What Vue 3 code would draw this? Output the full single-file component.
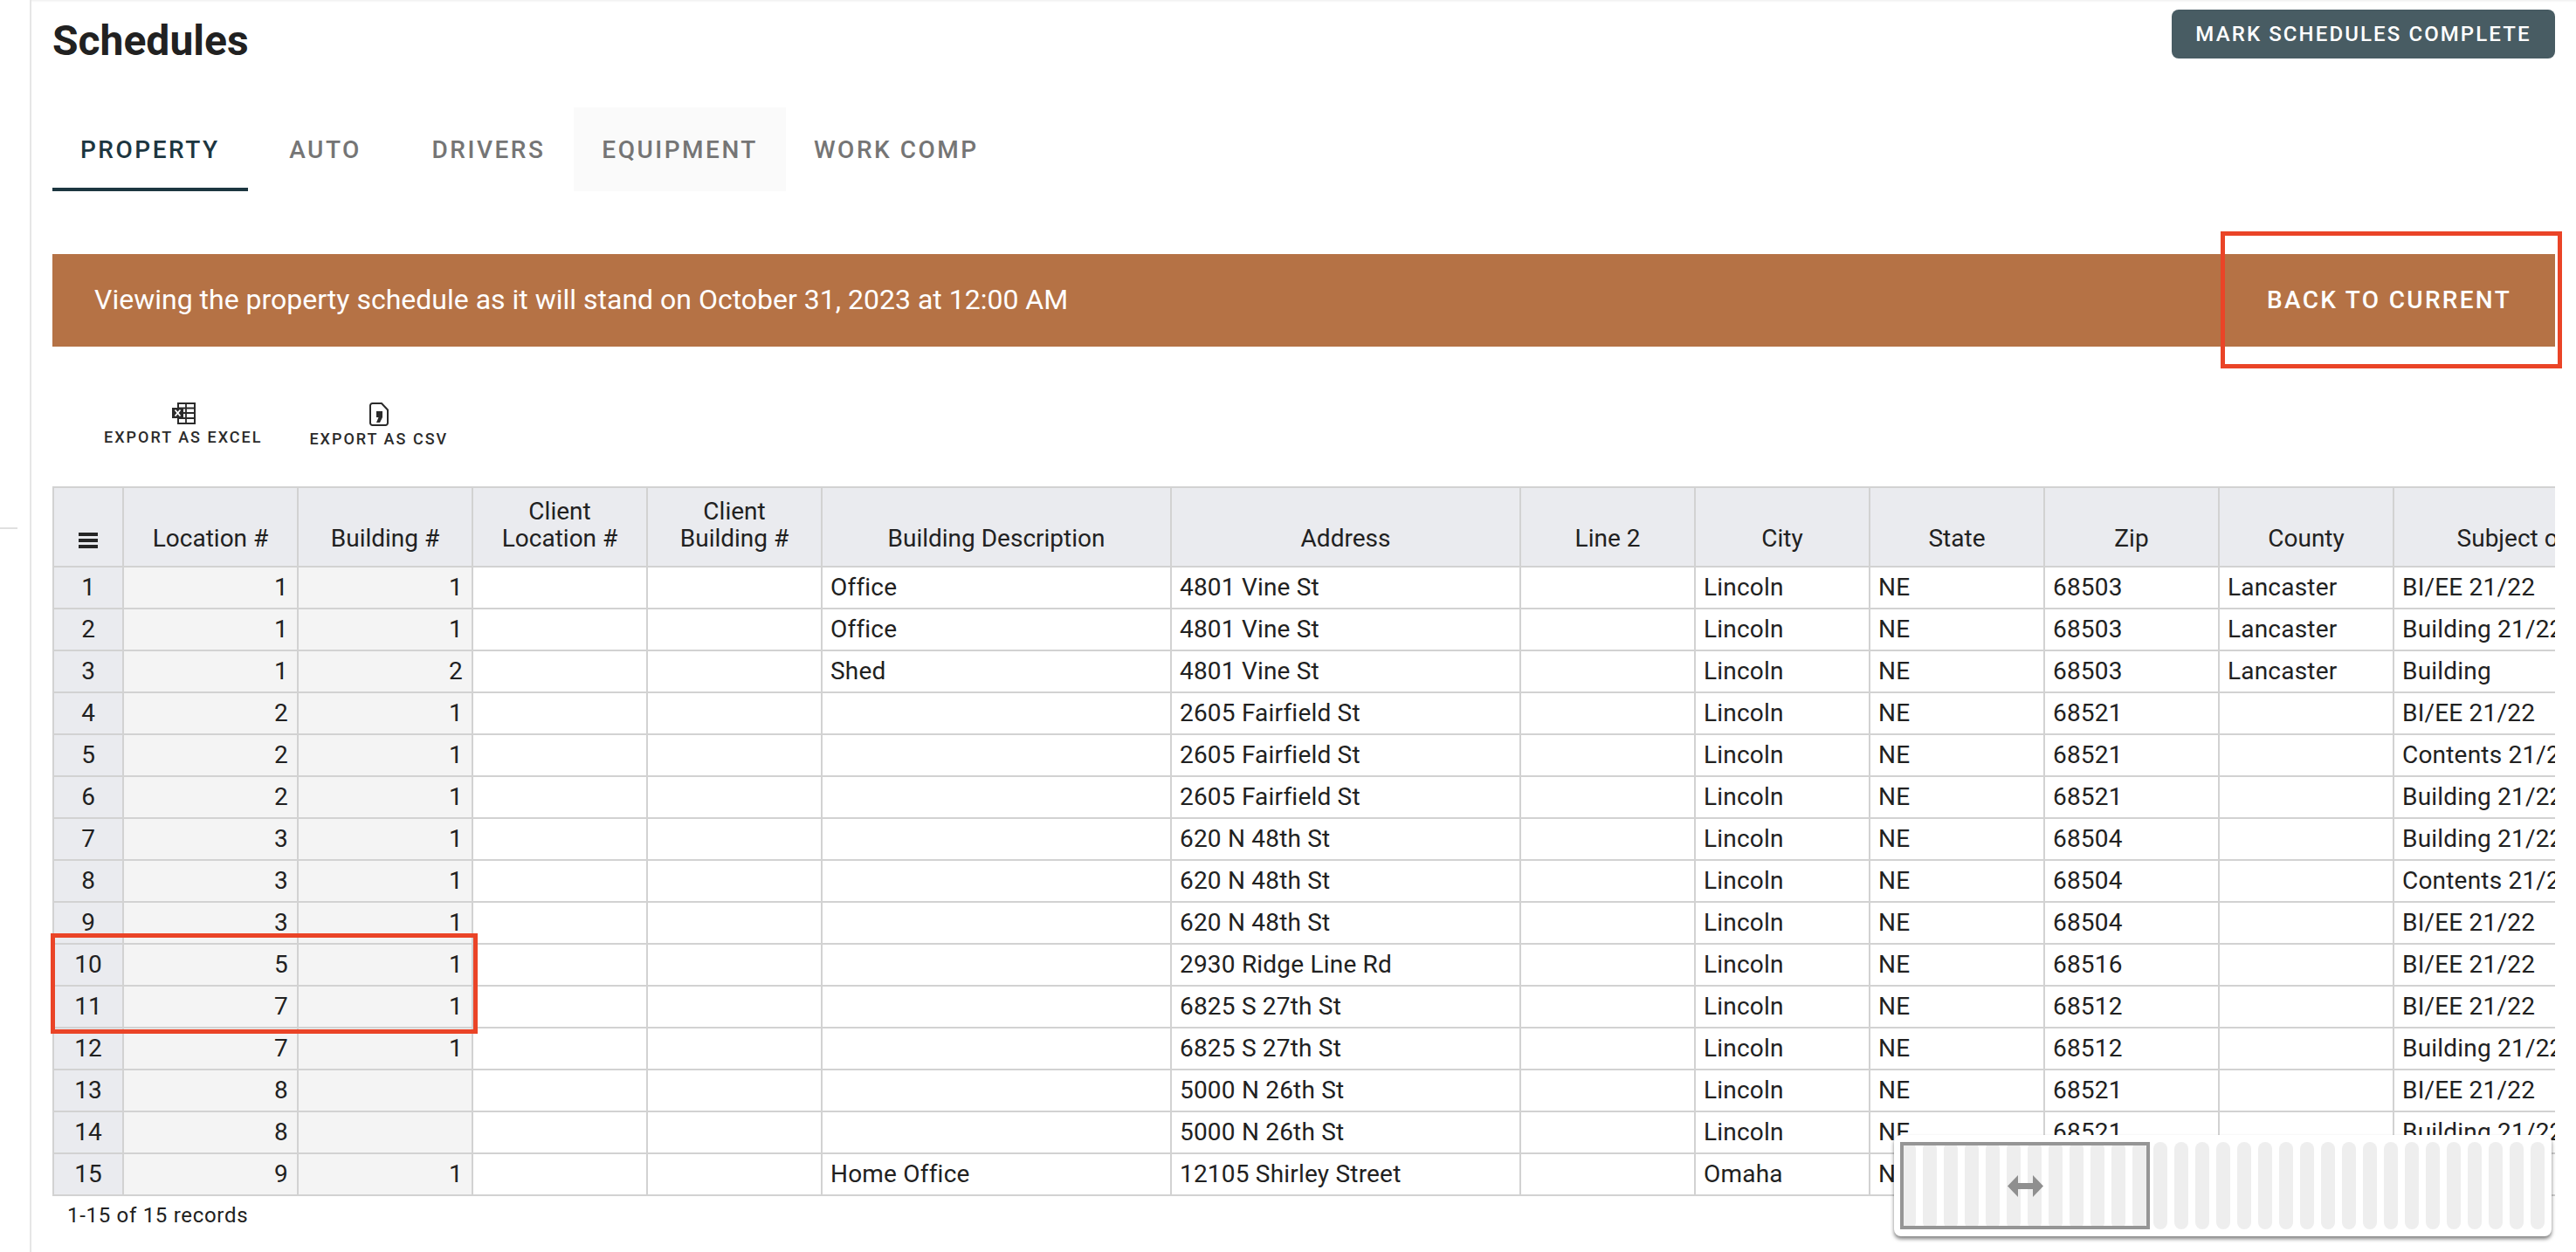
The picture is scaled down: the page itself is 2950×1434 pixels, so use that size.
<template>
  <div class="page">
    <div class="side-rule"></div>
    <main class="content">
      <header class="title-row">
        <h1 class="title">Schedules</h1>
        <button class="complete-btn">Mark Schedules Complete</button>
      </header>

      <nav class="tabs">
        <a
          v-for="tab in tabs"
          :key="tab"
          class="tab"
          :class="{ active: tab === 'Property', hovered: tab === 'Equipment' }"
        >{{ tab }}</a>
      </nav>

      <div class="banner-wrap">
        <div class="banner">
          <span>Viewing the property schedule as it will stand on October 31, 2023 at 12:00 AM</span>
          <button class="back-btn">Back to current</button>
        </div>
        <div class="callout callout-back"></div>
      </div>

      <div class="exports">
        <button class="export-btn excel">
          <svg width="28" height="25" viewBox="0 0 28 25">
            <path d="M8 1h19v23H8z" fill="none" stroke="#2b2b2b" stroke-width="2" />
            <path d="M17 1v23M8 6.500h19M8 12h19M8 18h19" fill="none" stroke="#2b2b2b" stroke-width="1.800" />
            <path d="M1 6h13v12H1z" fill="#2b2b2b" />
            <path d="M4.500 8.500l6 7M10.500 8.500l-6 7" stroke="#fff" stroke-width="1.800" fill="none" />
          </svg>
          <span>Export as Excel</span>
        </button>
        <button class="export-btn csv">
          <svg width="22" height="27" viewBox="0 0 22 27">
            <path d="M3.500 1H14l7 7.500v15a2.500 2.500 0 0 1-2.500 2.500h-15A2.500 2.500 0 0 1 1 23.500v-20A2.500 2.500 0 0 1 3.500 1z" fill="none" stroke="#2b2b2b" stroke-width="2" />
            <path d="M8 10h7v7l-3 6H8l2.500-6H8z" fill="#2b2b2b" />
          </svg>
          <span>Export as CSV</span>
        </button>
      </div>

      <div class="table-wrap">
        <div class="table-clip">
          <table class="grid">
            <colgroup>
              <col v-for="(w, i) in colWidths" :key="i" :style="{ width: w + 'px' }" />
            </colgroup>
            <thead>
              <tr>
                <th class="corner">
                  <svg width="22" height="20" viewBox="0 0 22 20">
                    <path d="M0 1h22v4H0zM0 8h22v4H0zM0 15h22v4H0z" fill="#262626" />
                  </svg>
                </th>
                <th v-for="h in headers" :key="h">
                  <span class="head-text">{{ h }}</span>
                </th>
              </tr>
            </thead>
            <tbody>
              <tr v-for="(row, i) in rows" :key="i">
                <th class="row-head">{{ i + 1 }}</th>
                <td class="num">{{ row[0] }}</td>
                <td class="num">{{ row[1] }}</td>
                <td></td>
                <td></td>
                <td>{{ row[2] }}</td>
                <td>{{ row[3] }}</td>
                <td></td>
                <td>{{ row[4] }}</td>
                <td>NE</td>
                <td>{{ row[5] }}</td>
                <td>{{ row[6] }}</td>
                <td>{{ row[7] }}</td>
              </tr>
            </tbody>
          </table>
        </div>
        <div class="callout callout-rows"></div>
        <div class="minimap">
          <div class="minimap-bars">
            <span v-for="n in 31" :key="n" class="bar"></span>
          </div>
          <div class="minimap-window">
            <svg width="41" height="25" viewBox="0 0 41 25">
              <path d="M0 12.500L12 0v9h17V0l12 12.500L29 25v-9H12v9z" fill="#8f8f8f" />
            </svg>
          </div>
        </div>
      </div>

      <p class="records">1-15 of 15 records</p>
    </main>
    <div class="side-tick"></div>
  </div>
</template>

<script setup>
const tabs = ['Property', 'Auto', 'Drivers', 'Equipment', 'Work Comp']

const colWidths = [80, 200, 200, 200, 200, 400, 400, 200, 200, 200, 200, 200, 400]

const headers = [
  'Location #',
  'Building #',
  'Client Location #',
  'Client Building #',
  'Building Description',
  'Address',
  'Line 2',
  'City',
  'State',
  'Zip',
  'County',
  'Subject of Insurance'
]

const rows = [
  [1, 1, 'Office', '4801 Vine St', 'Lincoln', '68503', 'Lancaster', 'BI/EE 21/22'],
  [1, 1, 'Office', '4801 Vine St', 'Lincoln', '68503', 'Lancaster', 'Building 21/22'],
  [1, 2, 'Shed', '4801 Vine St', 'Lincoln', '68503', 'Lancaster', 'Building'],
  [2, 1, '', '2605 Fairfield St', 'Lincoln', '68521', '', 'BI/EE 21/22'],
  [2, 1, '', '2605 Fairfield St', 'Lincoln', '68521', '', 'Contents 21/22'],
  [2, 1, '', '2605 Fairfield St', 'Lincoln', '68521', '', 'Building 21/22'],
  [3, 1, '', '620 N 48th St', 'Lincoln', '68504', '', 'Building 21/22'],
  [3, 1, '', '620 N 48th St', 'Lincoln', '68504', '', 'Contents 21/22'],
  [3, 1, '', '620 N 48th St', 'Lincoln', '68504', '', 'BI/EE 21/22'],
  [5, 1, '', '2930 Ridge Line Rd', 'Lincoln', '68516', '', 'BI/EE 21/22'],
  [7, 1, '', '6825 S 27th St', 'Lincoln', '68512', '', 'BI/EE 21/22'],
  [7, 1, '', '6825 S 27th St', 'Lincoln', '68512', '', 'Building 21/22'],
  [8, '', '', '5000 N 26th St', 'Lincoln', '68521', '', 'BI/EE 21/22'],
  [8, '', '', '5000 N 26th St', 'Lincoln', '68521', '', 'Building 21/22'],
  [9, 1, 'Home Office', '12105 Shirley Street', 'Omaha', '', '', '']
]
</script>

<style>
html,
body {
  background: #fff;
  overflow: hidden;
}
</style>

<style scoped>
.page {
  position: relative;
  height: 1434px;
  display: flex;
  font-family: Roboto, "Liberation Sans", sans-serif;
  color: #212121;
  overflow: hidden;
}

.side-rule {
  width: 2px;
  margin-left: 34px;
  background: #e6e6e6;
  flex-shrink: 0;
}

.side-tick {
  position: absolute;
  left: 0;
  top: 604px;
  width: 20px;
  height: 2px;
  background: #e0e0e0;
}

.content {
  flex: 1;
  min-width: 0;
  padding: 11px 24px 0 24px;
  box-shadow: inset 0 3px 3px -2px rgba(0, 0, 0, 0.08);
}

.title-row {
  display: flex;
  justify-content: space-between;
  align-items: flex-start;
  height: 112px;
}

.title {
  margin: 12px 0 0;
  font-size: 48px;
  line-height: 48px;
  font-weight: 700;
  color: #212121;
}

.complete-btn {
  height: 56px;
  width: 439px;
  padding: 0;
  border: none;
  border-radius: 8px;
  background: #485c63;
  color: #fff;
  font: 500 24px Roboto, sans-serif;
  letter-spacing: 2.100px;
  text-transform: uppercase;
}

.tabs {
  display: flex;
  height: 96px;
}

.tab {
  min-width: 178px;
  padding: 0 32px;
  box-sizing: border-box;
  display: flex;
  align-items: center;
  justify-content: center;
  font-size: 28px;
  font-weight: 500;
  letter-spacing: 2.500px;
  text-transform: uppercase;
  color: #757575;
}

.tab:nth-child(3) {
  padding: 0 33px;
}

.tab.active {
  color: #1c3640;
  border-bottom: 4px solid #1c3640;
  padding-top: 4px;
}

.tab.hovered {
  background: #fafafa;
}

.banner-wrap {
  position: relative;
  margin-top: 72px;
}

.banner {
  height: 106px;
  padding-left: 48px;
  display: flex;
  align-items: center;
  justify-content: space-between;
  background: #b57245;
  color: #fff;
  font-size: 32px;
}

.banner > span {
  margin-top: -2px;
}

.back-btn {
  height: 100%;
  padding: 0 50px 2px;
  border: none;
  background: transparent;
  color: #fff;
  font: 500 28px Roboto, sans-serif;
  letter-spacing: 2.300px;
  text-transform: uppercase;
}

.callout {
  position: absolute;
  border: 5px solid #ea4427;
  box-sizing: border-box;
  pointer-events: none;
}

.callout-back {
  top: -26px;
  right: -8px;
  width: 391px;
  height: 157px;
}

.callout-rows {
  top: 512px;
  left: -2px;
  width: 489px;
  height: 115px;
}

.exports {
  display: flex;
  margin-top: 64px;
  padding-left: 59px;
  gap: 54px;
}

.export-btn {
  display: flex;
  flex-direction: column;
  align-items: center;
  gap: 4px;
  padding: 0;
  border: none;
  background: transparent;
  color: #2b2b2b;
  font: 500 18px Roboto, sans-serif;
  letter-spacing: 2px;
  text-transform: uppercase;
}

.table-wrap {
  position: relative;
  margin-top: 44px;
  width: 2866px;
}

.table-clip {
  overflow: hidden;
  border-top: 2px solid #d2d2d2;
  border-left: 2px solid #d2d2d2;
}

.grid {
  border-collapse: separate;
  border-spacing: 0;
  table-layout: fixed;
  width: 3080px;
  font-size: 28px;
}

.grid th,
.grid td {
  box-sizing: border-box;
  border-right: 2px solid #d2d2d2;
  border-bottom: 2px solid #d2d2d2;
  font-weight: 400;
  white-space: nowrap;
  overflow: hidden;
}

.grid thead th {
  height: 91px;
  padding: 0 20px 16px;
  vertical-align: bottom;
  white-space: normal;
  line-height: 31px;
  background: #eaebef;
  text-align: center;
}

.grid thead th.corner {
  padding: 0 0 19px;
}

.corner svg {
  display: block;
  margin: 0 auto;
}

.grid tbody tr {
  height: 48px;
}

.grid tbody td,
.grid tbody th {
  padding-bottom: 2px;
}

.grid tbody td {
  padding-left: 9px;
  padding-right: 10px;
  letter-spacing: 0.200px;
}

.row-head {
  background: #eaebef;
  text-align: center;
}

.grid tbody td.num {
  background: #f4f4f4;
  text-align: right;
}

.records {
  margin: 7px 0 0 17px;
  font-size: 24px;
  line-height: 30px;
  letter-spacing: 0.700px;
}

.minimap {
  position: absolute;
  left: 2109px;
  top: 743px;
  width: 753px;
  height: 116px;
  box-sizing: border-box;
  padding: 8px 0 0 9px;
  background: #fff;
  border-radius: 8px;
  box-shadow: 0 3px 4px rgba(0, 0, 0, 0.5);
}

.minimap-bars {
  display: flex;
  gap: 8px;
  height: 100px;
}

.bar {
  width: 16px;
  border-radius: 8px;
  background: #eeeeee;
}

.minimap-window {
  position: absolute;
  left: 7px;
  top: 8px;
  width: 286px;
  height: 100px;
  box-sizing: border-box;
  border: 4px solid #959595;
  display: flex;
  align-items: center;
  justify-content: center;
}
</style>
